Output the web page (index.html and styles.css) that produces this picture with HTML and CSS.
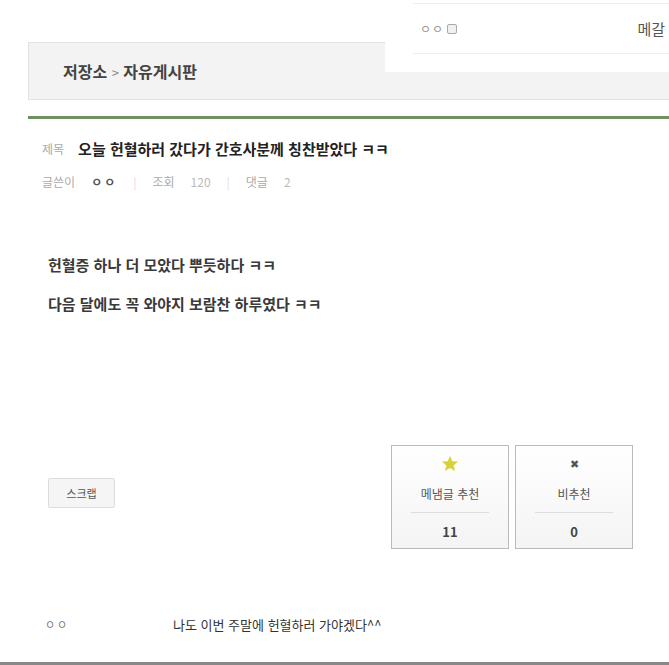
FILE: index.html
```html
<!DOCTYPE html>
<html lang="ko">
<head>
    <meta charset="UTF-8">
    <title>자유게시판</title>
    <link rel="stylesheet" href="styles.css">
</head>
<body>
    <div class="page">
        <!-- popup layer over the header -->
        <div class="popLayer">
            <div class="popRow">
                <span class="popNick">ㅇㅇ <span class="popIcon"></span></span>
                <span class="popRight">메갈</span>
            </div>
        </div>

        <div class="crumb">저장소 <span class="crumbSep">&gt;</span> 자유게시판</div>
        <div class="greenLine"></div>

        <div class="titleRow">
            <span class="label">제목</span>
            <span class="title">오늘 헌혈하러 갔다가 간호사분께 칭찬받았다 ㅋㅋ</span>
        </div>
        <div class="metaRow">
            <span class="label">글쓴이</span>
            <span class="nick">ㅇㅇ</span>
            <span class="bar">|</span>
            <span class="label">조회</span>
            <span class="num">120</span>
            <span class="bar">|</span>
            <span class="label">댓글</span>
            <span class="num">2</span>
        </div>

        <div class="content">
            <p>헌혈증 하나 더 모았다 뿌듯하다 ㅋㅋ</p>
            <p>다음 달에도 꼭 와야지 보람찬 하루였다 ㅋㅋ</p>
        </div>

        <div class="actions">
            <div class="scrapWrap">
                <button class="scrap">스크랩</button>
            </div>
            <div class="votes">
                <div class="vote">
                    <svg class="voteIcon" width="18" height="16" viewBox="0 0 24 22">
                        <polygon points="12,1 15,8.5 23,9 17,14.5 19,22 12,17.8 5,22 7,14.5 1,9 9,8.5" fill="#d8d23a"/>
                    </svg>
                    <div class="voteLabel">메냄글 추천</div>
                    <div class="voteLine"></div>
                    <div class="voteNum">11</div>
                </div>
                <div class="vote">
                    <div class="voteIcon xmark">✖</div>
                    <div class="voteLabel">비추천</div>
                    <div class="voteLine"></div>
                    <div class="voteNum">0</div>
                </div>
            </div>
        </div>

        <div class="comment">
            <span class="cNick">ㅇㅇ</span>
            <span class="cText">나도 이번 주말에 헌혈하러 가야겠다^^</span>
        </div>
        <div class="bottomLine"></div>
    </div>
</body>
</html>
```

FILE: styles.css
```css
body {
    margin: 0;
    background: #fff;
    font-family: "Noto Sans CJK KR", "Noto Sans", sans-serif;
    color: #333;
}

.page {
    position: relative;
    width: 669px;
    height: 665px;
    overflow: hidden;
    padding-top: 42px;
    box-sizing: border-box;
}

.popLayer {
    position: absolute;
    top: 0;
    left: 385px;
    width: 300px;
    height: 72px;
    background: #fff;
    z-index: 2;
}

.popRow {
    margin: 3px 0 0 28px;
    height: 49px;
    border-top: 1px solid #eee;
    border-bottom: 1px solid #eee;
    display: flex;
    align-items: center;
    justify-content: space-between;
    font-size: 12px;
    color: #999;
}

.popNick {
    margin-left: 7px;
    display: flex;
    align-items: center;
    gap: 3px;
    letter-spacing: 1px;
}

.popIcon {
    display: inline-block;
    width: 8px;
    height: 8px;
    border: 1px solid #aaa;
    border-radius: 2px;
    background: #f0f0f0;
}

.popRight {
    font-size: 15px;
    color: #555;
    margin-right: 20px;
}

.crumb {
    margin-left: 28px;
    height: 58px;
    background: #f3f3f3;
    border: 1px solid #e2e2e2;
    border-right: none;
    box-sizing: border-box;
    padding-left: 34px;
    line-height: 56px;
    font-size: 16px;
    font-weight: bold;
    color: #444;
}

.crumbSep {
    font-weight: normal;
    color: #888;
    font-size: 13px;
}

.greenLine {
    margin: 16px 0 0 28px;
    height: 3px;
    background: #6f9062;
}

.titleRow {
    margin: 18px 0 0 42px;
    display: flex;
    align-items: center;
    gap: 14px;
    height: 22px;
}

.label {
    font-size: 12px;
    color: #aaa;
}

.title {
    font-size: 15px;
    font-weight: bold;
    color: #222;
}

.metaRow {
    margin: 12px 0 0 42px;
    display: flex;
    align-items: center;
    gap: 16px;
    height: 20px;
}

.nick {
    font-size: 12px;
    color: #555;
    font-weight: bold;
    letter-spacing: 2px;
}

.num {
    font-size: 12px;
    color: #bbb;
}

.bar {
    font-size: 12px;
    color: #ddd;
}

.content {
    margin: 63px 0 0 48px;
    font-size: 15px;
    font-weight: bold;
    color: #3a3a3a;
}

.content p {
    margin: 0 0 17px;
    height: 22px;
}

.actions {
    margin: 130px 0 0 48px;
    display: flex;
}

.scrapWrap {
    width: 343px;
    padding-top: 33px;
}

.scrap {
    width: 67px;
    height: 30px;
    font-family: inherit;
    font-size: 11px;
    color: #555;
    background: #f5f5f5;
    border: 1px solid #ddd;
    border-radius: 2px;
}

.votes {
    display: flex;
    gap: 6px;
}

.vote {
    width: 118px;
    height: 104px;
    box-sizing: border-box;
    border: 1px solid #bbb;
    background: linear-gradient(#fff, #f4f4f4);
    display: flex;
    flex-direction: column;
    align-items: center;
    padding-top: 9px;
}

.voteIcon {
    height: 16px;
    display: block;
}

.xmark {
    font-size: 11px;
    color: #555;
    line-height: 16px;
}

.voteLabel {
    margin-top: 14px;
    font-size: 12px;
    color: #555;
}

.voteLine {
    width: 78px;
    height: 1px;
    background: #ddd;
    margin-top: 10px;
}

.voteNum {
    margin-top: 9px;
    font-size: 13px;
    font-weight: bold;
    color: #444;
}

.comment {
    margin: 65px 0 0 45px;
    display: flex;
    align-items: center;
    height: 20px;
}

.cNick {
    width: 128px;
    font-size: 11px;
    color: #777;
    letter-spacing: 2px;
}

.cText {
    font-size: 13px;
    color: #333;
}

.bottomLine {
    margin-top: 28px;
    height: 3px;
    background: #888;
}
```
